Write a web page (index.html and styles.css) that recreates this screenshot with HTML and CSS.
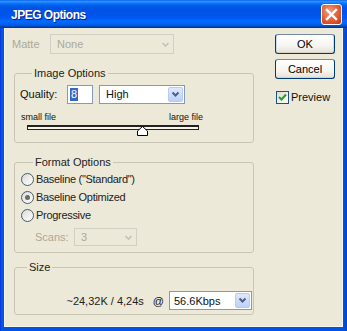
FILE: index.html
```html
<!DOCTYPE html>
<html>
<head>
<meta charset="utf-8">
<title>JPEG Options</title>
<link rel="stylesheet" href="styles.css">
</head>
<body>
<div class="window">
  <div class="titlebar">
    <span class="title">JPEG Options</span>
    <span class="close"><svg width="13" height="13" viewBox="0 0 13 13"><path d="M2 2 L11 11 M11 2 L2 11" stroke="#fff" stroke-width="2.4" stroke-linecap="square"/></svg></span>
  </div>
  <div class="client">
    <div class="main">
      <div class="matte-row">
        <span class="matte-lbl disabled">Matte</span>
        <div class="combo combo-disabled matte-combo">
          <span class="val">None</span>
          <span class="arrow"><svg width="9" height="9" viewBox="0 0 9 9"><path d="M1.5 3 L4.5 6 L7.5 3" fill="none" stroke="#c4c2b6" stroke-width="1.6"/></svg></span>
        </div>
      </div>

      <fieldset class="group g-image">
        <legend>Image Options</legend>
        <div class="quality-row">
          <span class="q-lbl">Quality:</span>
          <div class="textbox"><span class="selected">8</span></div>
          <div class="combo q-combo">
            <span class="val">High</span>
            <span class="btn"><svg width="9" height="9" viewBox="0 0 9 9"><path d="M1.5 2.5 L4.5 5.5 L7.5 2.5" fill="none" stroke="#4d6185" stroke-width="2"/></svg></span>
          </div>
        </div>
        <div class="slider-labels"><span>small file</span><span>large file</span></div>
        <div class="slider">
          <div class="track"></div>
          <svg class="thumb" style="left: calc(67% - 5px)" width="11" height="10" viewBox="0 0 11 10"><path d="M5.5 0.5 L10.5 5 L10.5 9.5 L0.5 9.5 L0.5 5 Z" fill="#fff" stroke="#000"/></svg>
        </div>
      </fieldset>

      <fieldset class="group g-format">
        <legend>Format Options</legend>
        <label class="radio-row"><span class="radio"></span><span>Baseline ("Standard")</span></label>
        <label class="radio-row"><span class="radio checked"></span><span>Baseline Optimized</span></label>
        <label class="radio-row"><span class="radio"></span><span>Progressive</span></label>
        <div class="scans-row">
          <span class="scans-lbl disabled">Scans:</span>
          <div class="combo combo-disabled scans-combo">
            <span class="val">3</span>
            <span class="arrow"><svg width="9" height="9" viewBox="0 0 9 9"><path d="M1.5 3 L4.5 6 L7.5 3" fill="none" stroke="#c4c2b6" stroke-width="1.6"/></svg></span>
          </div>
        </div>
      </fieldset>

      <fieldset class="group g-size">
        <legend>Size</legend>
        <div class="size-row">
          <span class="size-txt">~24,32K / 4,24s</span>
          <span class="at">@</span>
          <div class="combo rate-combo">
            <span class="val">56.6Kbps</span>
            <span class="btn"><svg width="9" height="9" viewBox="0 0 9 9"><path d="M1.5 2.5 L4.5 5.5 L7.5 2.5" fill="none" stroke="#4d6185" stroke-width="2"/></svg></span>
          </div>
        </div>
      </fieldset>
    </div>

    <div class="side">
      <button class="btn-xp btn-default">OK</button>
      <button class="btn-xp">Cancel</button>
      <label class="check-row"><span class="checkbox"><svg width="9" height="9" viewBox="0 0 9 9"><path d="M1 4 L3.5 6.5 L8 1.5" fill="none" stroke="#21a121" stroke-width="2"/></svg></span><span>Preview</span></label>
    </div>
  </div>
</div>
</body>
</html>
```

FILE: styles.css
```css
* { box-sizing: border-box; }
html, body { margin: 0; padding: 0; }
body {
  width: 347px;
  height: 331px;
  overflow: hidden;
  font-family: "Liberation Sans", Arial, sans-serif;
  font-size: 11px;
  color: #111;
  background: #ece9d8;
}

.window {
  width: 347px;
  height: 331px;
  display: flex;
  flex-direction: column;
  background: linear-gradient(to right, #0831d9 0, #0a5de8 2px, #0054e3 3px, #0054e3 344px, #0a3fc4 347px);
}

.titlebar {
  height: 28px;
  display: flex;
  align-items: center;
  padding: 0 5px 0 11px;
  background: linear-gradient(to bottom, #0058ee 0%, #3593ff 4%, #288eff 7%, #127dff 10%, #036ffc 14%, #0262ee 18%, #0057e5 24%, #0054e3 30%, #0055eb 56%, #005bf5 66%, #026afe 76%, #0062ef 86%, #0052d6 92%, #0040ab 96%, #003092 100%);
}

.title {
  flex: 1;
  color: #fff;
  font-family: "Liberation Sans", Arial, sans-serif;
  font-weight: bold;
  font-size: 12px;
  letter-spacing: -0.5px;
  text-shadow: 1px 1px 0 #0a1c8c;
  padding-top: 1px;
}

.close {
  width: 21px;
  height: 21px;
  border: 1px solid #fff;
  border-radius: 3px;
  background: radial-gradient(circle at 40% 35%, #f2a08a 0%, #e5673f 45%, #d6461c 80%, #c23a12 100%);
  display: flex;
  align-items: center;
  justify-content: center;
}
.close svg { display: block; }

.client {
  flex: 1;
  margin: 0 4px 4px 4px;
  background: #ece9d8;
  display: flex;
  box-shadow: inset 1px 0 0 #f6f5ee, inset -1px -1px 0 #f6f5ee;
}

.main {
  width: 257px;
  padding: 6px 0 0 8px;
  display: flex;
  flex-direction: column;
}

.disabled { color: #aca899; }

.matte-row {
  display: flex;
  align-items: center;
  height: 20px;
}
.matte-lbl { width: 38px; }

.combo {
  display: flex;
  align-items: center;
  border: 1px solid #7f9db9;
  background: #fff;
  padding-left: 3px;
}
.combo .val { flex: 1; }
.combo-disabled {
  background: #ece9d8;
  border-color: #d2d0c4;
  color: #aca899;
}
.combo .arrow {
  width: 15px;
  display: flex;
  align-items: center;
  justify-content: center;
}
.combo .btn {
  width: 15px;
  height: calc(100% - 2px);
  margin-right: 1px;
  border-radius: 2px;
  background: linear-gradient(to bottom, #dfe8fd, #bcd0f8);
  border: 1px solid #b9cbf3;
  display: flex;
  align-items: center;
  justify-content: center;
}
.matte-combo { width: 124px; height: 20px; padding-left: 6px; }

.group {
  margin: 0 0 0 2px;
  width: 240px;
  border: 1px solid #c8c5b5;
  border-radius: 3px;
  padding: 0 0 0 5px;
  min-width: 0;
}
.group legend {
  margin-left: 12px;
  padding: 0 2px;
  line-height: 13px;
  color: #222;
}

.g-image { margin-top: 13px; height: 76px; padding-top: 4px; }
.quality-row {
  display: flex;
  align-items: center;
  height: 20px;
}
.q-lbl { width: 47px; }
.textbox {
  width: 26px;
  height: 19px;
  border: 1px solid #7f9db9;
  background: #fff;
  padding: 2px 0 0 2px;
}
.textbox .selected {
  display: inline-block;
  background: #316ac5;
  color: #fff;
  line-height: 13px;
  padding: 0 1px;
}
.q-combo { width: 86px; height: 19px; margin-left: 6px; padding-left: 6px; }

.slider-labels {
  margin: 8px 0 0 1px;
  width: 182px;
  height: 11px;
  line-height: 11px;
  font-size: 9px;
  display: flex;
  justify-content: space-between;
}
.slider {
  position: relative;
  margin: 2px 0 0 7px;
  width: 172px;
  height: 12px;
}
.track {
  margin-top: 2px;
  height: 5px;
  border: 1px solid #222;
  border-top-width: 2px;
  background: #f4f3ee;
}
.thumb {
  position: absolute;
  top: 1px;
  display: block;
}

.g-format { margin-top: 13px; height: 97px; padding-top: 1px; padding-left: 6px; }
.radio-row {
  display: flex;
  align-items: center;
  height: 18px;
  color: #222;
  letter-spacing: -0.3px;
}
.radio {
  width: 13px;
  height: 13px;
  border-radius: 50%;
  border: 1px solid #4a5a6e;
  background: linear-gradient(135deg, #dcdad0, #ffffff);
  margin-right: 2px;
  display: flex;
  align-items: center;
  justify-content: center;
}
.radio.checked::after {
  content: "";
  width: 5px;
  height: 5px;
  border-radius: 50%;
  background: #6a6a66;
}
.scans-row {
  display: flex;
  align-items: center;
  height: 18px;
  margin-top: 4px;
}
.scans-lbl { margin-left: 14px; width: 39px; }
.scans-combo { width: 63px; height: 18px; padding-left: 6px; }

.g-size { margin-top: 8px; height: 54px; padding: 17px 1px 0 0; }
.size-row {
  display: flex;
  align-items: center;
  justify-content: flex-end;
  height: 19px;
}
.size-txt { color: #222; }
.at { margin: 0 5px 0 9px; }
.rate-combo { width: 83px; height: 19px; padding-left: 4px; }

.side {
  padding: 6px 0 0 14px;
  display: flex;
  flex-direction: column;
  align-items: flex-start;
}
.btn-xp {
  width: 60px;
  height: 20px;
  font-family: "Liberation Sans", Arial, sans-serif;
  font-size: 11px;
  color: #000;
  border: 1px solid #003c74;
  border-top-color: #7388a8;
  border-radius: 3px;
  background: linear-gradient(to bottom, #ffffff 0%, #f6f5f1 60%, #e3e1d6 100%);
  box-shadow: inset 0 -1px 0 #d6d0c5;
  padding: 0;
}
.btn-xp + .btn-xp { margin-top: 5px; }
.btn-default {
  box-shadow: inset 0 -1px 0 #d6d0c5, inset 1px 0 0 #cbdcf5, inset -1px 0 0 #cbdcf5;
}

.check-row {
  display: flex;
  align-items: center;
  margin-top: 11px;
  height: 14px;
  margin-left: 1px;
}
.checkbox {
  width: 13px;
  height: 13px;
  border: 1px solid #1c5180;
  background: linear-gradient(135deg, #dcdad0, #ffffff);
  margin-right: 2px;
  display: flex;
  align-items: center;
  justify-content: center;
}
.checkbox svg { display: block; }
```
